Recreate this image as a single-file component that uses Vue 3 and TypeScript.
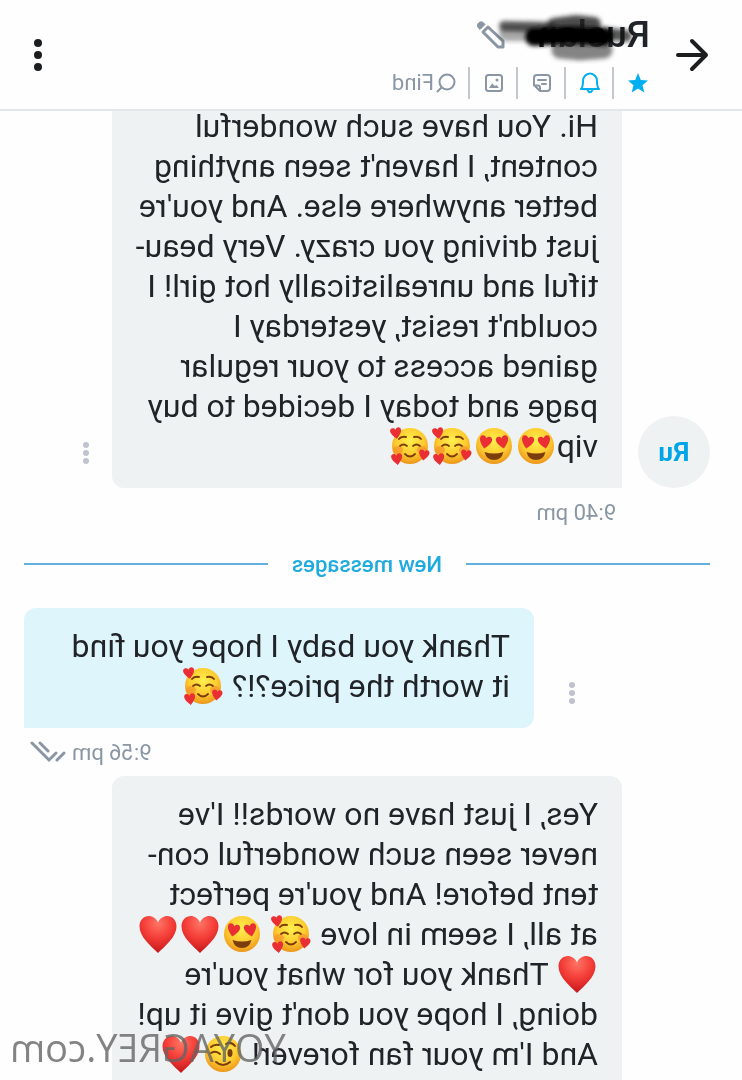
<script setup lang="ts">
type Emoji = 'adore' | 'love' | 'heart' | 'wink'
type Part = string | { emoji: Emoji }
interface Message {
  id: number
  outgoing: boolean
  menu: boolean
  avatar?: string
  time?: string
  divider?: string
  lines: Part[][]
}

const e = (emoji: Emoji): Part => ({ emoji })
const labels: Record<Emoji, string> = { adore: '🥰', love: '😍', heart: '❤️', wink: '😉' }

const messages: Message[] = [
  {
    id: 1,
    outgoing: false,
    menu: true,
    avatar: 'Ru',
    time: '9:40 pm',
    divider: 'New messages',
    lines: [
      ['Hi. You have such wonderful'],
      ["content, I haven't seen anything"],
      ["better anywhere else. And you're"],
      ['just driving you crazy. Very beau-'],
      ['tiful and unrealistically hot girl! I'],
      ["couldn't resist, yesterday I"],
      ['gained access to your regular'],
      ['page and today I decided to buy'],
      ['vip', e('love'), e('love'), e('adore'), e('adore')],
    ],
  },
  {
    id: 2,
    outgoing: true,
    menu: true,
    time: '9:56 pm',
    lines: [['Thank you baby I hope you find'], ['it worth the price?!? ', e('adore')]],
  },
  {
    id: 3,
    outgoing: false,
    menu: false,
    lines: [
      ["Yes, I just have no words!! I've"],
      ['never seen such wonderful con-'],
      ["tent before! And you're perfect"],
      ['at all, I seem in love ', e('adore'), ' ', e('love'), e('heart'), e('heart')],
      [e('heart'), " Thank you for what you're"],
      ["doing, I hope you don't give it up!"],
      ["And I'm your fan forever! ", e('wink'), e('heart')],
    ],
  },
]
</script>

<template>
  <div class="app">
    <svg class="defs" aria-hidden="true">
      <defs>
        <radialGradient id="face" cx="50%" cy="35%" r="65%">
          <stop offset="0" stop-color="#fff04e" />
          <stop offset="0.6" stop-color="#fdcb2f" />
          <stop offset="1" stop-color="#ec961c" />
        </radialGradient>
        <radialGradient id="red" cx="50%" cy="20%" r="80%">
          <stop offset="0" stop-color="#ff7565" />
          <stop offset="0.5" stop-color="#f43d37" />
          <stop offset="1" stop-color="#c4161b" />
        </radialGradient>
        <filter id="soft" x="-20%" y="-40%" width="140%" height="180%">
          <feGaussianBlur stdDeviation="2" />
        </filter>
        <path id="h" d="M0 7C-4 3-6.500 0-6.500-3C-6.500-7-1.500-7.500 0-4C1.500-7.500 6.500-7 6.500-3C6.500 0 4 3 0 7Z" />
      </defs>
    </svg>

    <header class="top">
      <button class="icon-btn back" aria-label="Back">
        <svg width="34" height="34" viewBox="0 0 34 34" fill="none" stroke="#1b1d1f" stroke-width="4" stroke-linecap="round" stroke-linejoin="round">
          <path d="M31 17H3M17 3L3 17L17 31" />
        </svg>
      </button>
      <div class="who">
        <div class="name-row">
          <h1>Ruslan
            <svg class="smudge" width="170" height="60" viewBox="0 0 170 60" aria-hidden="true">
              <g filter="url(#soft)" fill="none" stroke-linecap="round">
                <path d="M56 15L74 13L96 16" stroke="#222" stroke-opacity=".8" stroke-width="14" />
                <path d="M46 41L70 43L90 41" stroke="#333" stroke-opacity=".6" stroke-width="17" />
                <path d="M100 18L146 17" stroke="#222" stroke-opacity=".75" stroke-width="10" />
                <path d="M104 25L144 25" stroke="#222" stroke-opacity=".4" stroke-width="14" />
                <path d="M24 27L46 24" stroke="#111" stroke-opacity=".7" stroke-width="12" />
                <path d="M46 28L80 26L116 28" stroke="#060606" stroke-width="18" />
              </g>
            </svg>
          </h1>
          <button class="icon-btn" aria-label="Edit name">
            <svg width="28" height="28" viewBox="0 0 28 28" fill="none" stroke="#8a96a3" stroke-width="3" stroke-linejoin="round">
              <path d="M2 26V20L17 6L22 11L7 26Z" />
              <path d="M20 3.500Q23-1 26.500 2Q29.500 5 25 8.500Z" fill="#8a96a3" stroke-width="1" />
            </svg>
          </button>
        </div>
        <nav class="tools">
          <button class="icon-btn" aria-label="Favorite">
            <svg width="24" height="24" viewBox="0 0 24 24" fill="#00aff0">
              <path d="M12 2L14.800 9L22 9.500L16.500 14.300L18.300 21.500L12 17.500L5.700 21.500L7.500 14.300L2 9.500L9.200 9Z" />
            </svg>
          </button>
          <button class="icon-btn" aria-label="Notifications">
            <svg width="24" height="24" viewBox="0 0 24 24" fill="none" stroke="#00aff0" stroke-width="2" stroke-linecap="round" stroke-linejoin="round">
              <path d="M3 18H21C19 16 19 14 19 10A7 7.500 0 0 0 5 10C5 14 5 16 3 18ZM9.500 19Q12 23.500 14.500 19" />
            </svg>
          </button>
          <button class="icon-btn" aria-label="Notes">
            <svg width="24" height="24" viewBox="0 0 24 24" fill="none" stroke="#8a96a3" stroke-width="2" stroke-linecap="round" stroke-linejoin="round">
              <path d="M10 20H17Q20 20 20 17V7Q20 4 17 4H7Q4 4 4 7V14L10 20V16.500Q10 14.500 8 14.500H4M8 9H16M12 13H16" transform="translate(24 0) scale(-1 1)" />
            </svg>
          </button>
          <button class="icon-btn" aria-label="Media">
            <svg width="24" height="24" viewBox="0 0 24 24" fill="none" stroke="#8a96a3" stroke-width="2">
              <rect x="4" y="4" width="16" height="16" rx="2.500" />
              <path d="M7 17L9.500 14L11 15L14 12.500L17 17Z" fill="#8a96a3" stroke="none" />
              <circle cx="9" cy="9" r="1.500" fill="#8a96a3" stroke="none" />
            </svg>
          </button>
          <button class="icon-btn find">
            <svg width="20" height="20" viewBox="0 0 20 20" fill="none" stroke="#8a96a3" stroke-width="2" stroke-linecap="round">
              <circle cx="9" cy="9" r="7.500" />
              <path d="M14.500 14.500L18.500 18.500" />
            </svg>
            Find
          </button>
        </nav>
      </div>
      <button class="icon-btn more" aria-label="More">
        <svg width="10" height="34" viewBox="0 0 10 34" fill="#1b1d1f">
          <circle cx="5" cy="5" r="4" /><circle cx="5" cy="17" r="4" /><circle cx="5" cy="29" r="4" />
        </svg>
      </button>
    </header>

    <main class="thread">
      <template v-for="m in messages" :key="m.id">
        <article class="row" :class="{ out: m.outgoing }">
          <div class="side">
            <div v-if="m.avatar" class="avatar">{{ m.avatar }}</div>
          </div>
          <div class="bubble">
            <div v-for="(line, i) in m.lines" :key="i" class="line">
              <template v-for="(p, j) in line" :key="j">
                <template v-if="typeof p === 'string'">{{ p }}</template>
                <svg v-else class="emoji" viewBox="0 0 42 40" role="img" :aria-label="labels[p.emoji]">
                  <path v-if="p.emoji === 'heart'" d="M21 39C14 32 2.500 23 2.500 12.500C2.500 0 17-1.500 21 8.500C25-1.500 39.500 0 39.500 12.500C39.500 23 28 32 21 39Z" fill="url(#red)" />
                  <template v-else>
                    <circle cx="21" cy="20" r="18" fill="url(#face)" />
                    <g v-if="p.emoji === 'love'">
                      <use href="#h" fill="#e92f33" transform="translate(12.500 16) rotate(12) scale(.95)" />
                      <use href="#h" fill="#e92f33" transform="translate(29.500 16) rotate(-12) scale(.95)" />
                      <path d="M11.500 26Q21 29 30.500 26Q28.500 34 21 34Q13.500 34 11.500 26Z" fill="#7b3d0c" />
                    </g>
                    <g v-else-if="p.emoji === 'adore'">
                      <ellipse cx="9" cy="24" rx="5" ry="4" fill="#f58b2c" opacity=".6" />
                      <ellipse cx="33" cy="24" rx="5" ry="4" fill="#f58b2c" opacity=".6" />
                      <path d="M11 20Q14.500 17 18 20M24 20Q27.500 17 31 20M16 28Q21 33 26 28M10 13Q12 10 17 11M25 11Q30 10 32 13" fill="none" stroke="#7b3d0c" stroke-width="1.800" stroke-linecap="round" />
                      <use href="#h" fill="#e92f33" transform="translate(35 7) rotate(10) scale(.85)" />
                      <use href="#h" fill="#e92f33" transform="translate(7 29) rotate(-8) scale(.8)" />
                      <use href="#h" fill="#e92f33" transform="translate(34 33) rotate(8) scale(.85)" />
                    </g>
                    <g v-else>
                      <ellipse cx="14" cy="19" rx="2.500" ry="4" fill="#7b3d0c" />
                      <path d="M24 20Q28 16 33 19M9 12Q13 7 18 10M25 11Q30 10 33 13M14 28Q21 34 28 28" fill="none" stroke="#7b3d0c" stroke-width="2" stroke-linecap="round" />
                    </g>
                  </template>
                </svg>
              </template>
            </div>
          </div>
          <div class="actions">
            <button v-if="m.menu" class="icon-btn" aria-label="Message options">
              <svg width="8" height="24" viewBox="0 0 8 24" fill="#bfc3cd">
                <circle cx="4" cy="4" r="3" /><circle cx="4" cy="12" r="3" /><circle cx="4" cy="20" r="3" />
              </svg>
            </button>
          </div>
        </article>
        <div v-if="m.time" class="meta" :class="{ out: m.outgoing }">
          <time>{{ m.time }}</time>
          <svg v-if="m.outgoing" width="36" height="22" viewBox="0 0 36 22" fill="none" stroke="#8a96a3" stroke-width="3" stroke-linecap="round" role="img" aria-label="Read">
            <path d="M2 12L9 19M10 12L17 19L34 2M18 10L26 2" />
          </svg>
        </div>
        <div v-if="m.divider" class="divider"><span>{{ m.divider }}</span></div>
      </template>
    </main>

    <div class="watermark">YOYAGREY.com</div>
  </div>
</template>

<style>
body {
  margin: 0;
}
</style>

<style scoped>
.app {
  position: relative;
  display: flex;
  flex-direction: column;
  height: 100vh;
  overflow: hidden;
  background: #fefefe;
  color: #202428;
  font-family: Roboto, "Liberation Sans", sans-serif;
  transform: scaleX(-1);
}
.defs {
  position: absolute;
  width: 0;
  height: 0;
}
.icon-btn {
  display: flex;
  align-items: center;
  justify-content: center;
  padding: 0;
  border: 0;
  background: none;
  font: inherit;
  color: #8a96a3;
  cursor: pointer;
}
.top {
  position: relative;
  z-index: 1;
  flex: none;
  display: flex;
  align-items: center;
  box-sizing: border-box;
  height: 111px;
  padding: 0 32px;
  background: #fefefe;
  border-bottom: 2px solid #e4e7ea;
}
.back {
  width: 36px;
}
.who {
  flex: 1;
  padding-left: 24px;
}
.name-row {
  display: flex;
  align-items: center;
  gap: 32px;
  height: 48px;
}
h1 {
  position: relative;
  margin: 0;
  font-size: 37px;
  line-height: 44px;
  font-weight: 500;
}
.smudge {
  position: absolute;
  top: -4px;
  left: 0;
}
.tools {
  display: flex;
  align-items: center;
  height: 32px;
  margin-top: 8px;
}
.tools .icon-btn {
  width: 48px;
  height: 32px;
  box-sizing: border-box;
  padding-right: 2px;
  border-left: 2px solid #c3c8ce;
}
.tools .icon-btn:first-child {
  width: 36px;
  padding-right: 12px;
  border-left: 0;
}
.tools .find {
  width: auto;
  gap: 2px;
  padding-left: 12px;
  font-size: 22px;
}
.more {
  width: 12px;
}
.thread {
  flex: 1;
  min-height: 0;
  margin-top: -23px;
}
.row {
  display: flex;
  padding: 0 24px 0 32px;
}
.side {
  flex: none;
  display: flex;
  align-items: flex-end;
  width: 88px;
}
.avatar {
  display: flex;
  align-items: center;
  justify-content: center;
  width: 72px;
  height: 72px;
  border-radius: 50%;
  background: #eef2f3;
  color: #00a5e8;
  font-size: 26px;
  font-weight: 700;
}
.bubble {
  flex: 1;
  min-width: 0;
  padding: 18px 24px 22px;
  box-sizing: border-box;
  border-radius: 12px 12px 12px 0;
  background: #eef2f3;
  font-size: 32px;
  line-height: 40px;
}
.bubble,
.line {
  white-space: pre;
}
.out .bubble {
  order: 2;
  border-radius: 12px 12px 0 12px;
  background: #def5fb;
}
.line {
  height: 40px;
}
.emoji {
  width: 42px;
  height: 40px;
  vertical-align: top;
}
.actions {
  flex: none;
  display: flex;
  align-items: flex-end;
  width: 66px;
  padding: 0 0 23px 22px;
}
.out .actions {
  order: 1;
  justify-content: flex-end;
  width: 54px;
  padding: 0 34px 23px 0;
}
.meta {
  display: flex;
  align-items: center;
  gap: 6px;
  height: 48px;
  padding: 0 30px 0 126px;
  color: #8a96a3;
  font-size: 22px;
}
.meta.out {
  justify-content: flex-end;
}
.divider {
  display: flex;
  align-items: center;
  gap: 24px;
  height: 56px;
  margin-bottom: 16px;
  padding: 0 24px 0 32px;
  color: #1fabdf;
  font-size: 22px;
  font-weight: 500;
}
.divider::before,
.divider::after {
  content: "";
  flex: 1;
  height: 2px;
  background: #62b0dc;
}
.watermark {
  position: absolute;
  right: 10px;
  bottom: 6px;
  color: rgba(100, 100, 100, 0.8);
  font-family: "Open Sans", "Noto Sans", sans-serif;
  font-size: 38px;
  line-height: 54px;
}
</style>
